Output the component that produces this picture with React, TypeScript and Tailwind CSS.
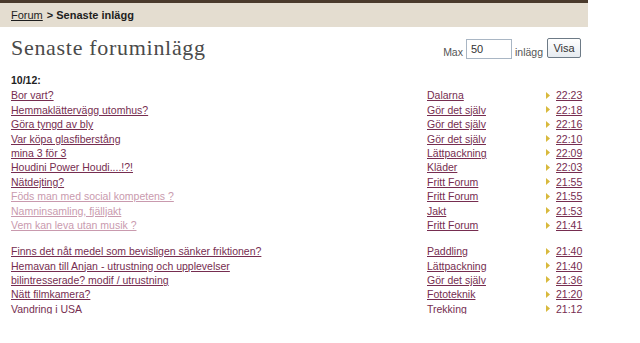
type Post = { title: string; cat: string; time: string; seen?: boolean };

const groups: Post[][] = [
  [
    { title: "Bor vart?", cat: "Dalarna", time: "22:23" },
    { title: "Hemmaklättervägg utomhus?", cat: "Gör det själv", time: "22:18" },
    { title: "Göra tyngd av bly", cat: "Gör det själv", time: "22:16" },
    { title: "Var köpa glasfiberstång", cat: "Gör det själv", time: "22:10" },
    { title: "mina 3 för 3", cat: "Lättpackning", time: "22:09" },
    { title: "Houdini Power Houdi....!?!", cat: "Kläder", time: "22:03" },
    { title: "Nätdejting?", cat: "Fritt Forum", time: "21:55" },
    { title: "Föds man med social kompetens ?", cat: "Fritt Forum", time: "21:55", seen: true },
    { title: "Namninsamling, fjälljakt", cat: "Jakt", time: "21:53", seen: true },
    { title: "Vem kan leva utan musik ?", cat: "Fritt Forum", time: "21:41", seen: true },
  ],
  [
    { title: "Finns det nåt medel som bevisligen sänker friktionen?", cat: "Paddling", time: "21:40" },
    { title: "Hemavan till Anjan - utrustning och upplevelser", cat: "Lättpackning", time: "21:40" },
    { title: "bilintresserade? modif / utrustning", cat: "Gör det själv", time: "21:36" },
    { title: "Nätt filmkamera?", cat: "Fototeknik", time: "21:20" },
    { title: "Vandring i USA", cat: "Trekking", time: "21:12" },
  ],
];

function Row({ p }: { p: Post }) {
  const link = p.seen ? "text-[#c99aae]" : "text-[#762d50]";
  return (
    <div className="flex h-[14.45px] items-center leading-[14px]">
      <div className="w-[416px] shrink-0">
        <a className={`${link} underline underline-offset-[1px] cursor-pointer`}>{p.title}</a>
      </div>
      <div className="w-[119px] shrink-0">
        <a className="text-[#762d50] underline underline-offset-[1px] cursor-pointer">{p.cat}</a>
      </div>
      <div className="flex items-center">
        <svg width="5" height="7" viewBox="0 0 5 7" className="mr-[5px]">
          <path d="M0 0 L4 3.5 L0 7 Z" fill="#d8b93c" />
        </svg>
        <a className="text-[#762d50] underline underline-offset-[1px] cursor-pointer">{p.time}</a>
      </div>
    </div>
  );
}

export default function App() {
  return (
    <div className="w-[640px] h-[343px] bg-white overflow-hidden font-['Liberation_Sans',Arial,sans-serif]">
      <div className="w-[588px] h-[314px] overflow-hidden">
        <div className="h-[3px] bg-[#4a3a2c]" />
        <div className="h-[24px] bg-[#e4ddd0] flex items-center px-[11px] text-[11px] text-[#1e1e1e]">
          <a className="underline cursor-pointer">Forum</a>
          <span className="font-bold ml-[4px]">&gt; Senaste inlägg</span>
        </div>
        <div className="flex items-start justify-between pl-[11px] pr-[7px] mt-[7px]">
          <h1 className="font-['Liberation_Serif',serif] text-[22px] leading-[28px] tracking-[0.7px] text-[#4a4a4a]">
            Senaste foruminlägg
          </h1>
          <div className="flex items-start gap-[3px] text-[10.5px] text-[#555] mt-[5px]">
            <span className="mt-[6px]">Max</span>
            <input
              defaultValue="50"
              className="w-[46px] h-[20px] border border-[#a9b6c4] px-[4px] text-[11px] text-[#333] outline-none"
            />
            <span className="mt-[6px] mr-[1px]">inlägg</span>
            <button className="h-[20px] w-[34px] mt-[-1px] border border-[#6d7a86] rounded-[2px] bg-gradient-to-b from-[#ffffff] to-[#e6ebf0] text-[11px] text-[#333]">
              Visa
            </button>
          </div>
        </div>
        <div className="pl-[11px] mt-[11px] text-[10.5px]">
          <div className="font-bold text-[#222] leading-[14px] mb-[1px]">10/12:</div>
          {groups.map((g, i) => (
            <div key={i} className={i > 0 ? "mt-[11.5px]" : ""}>
              {g.map((p) => (
                <Row key={p.title} p={p} />
              ))}
            </div>
          ))}
        </div>
      </div>
    </div>
  );
}
